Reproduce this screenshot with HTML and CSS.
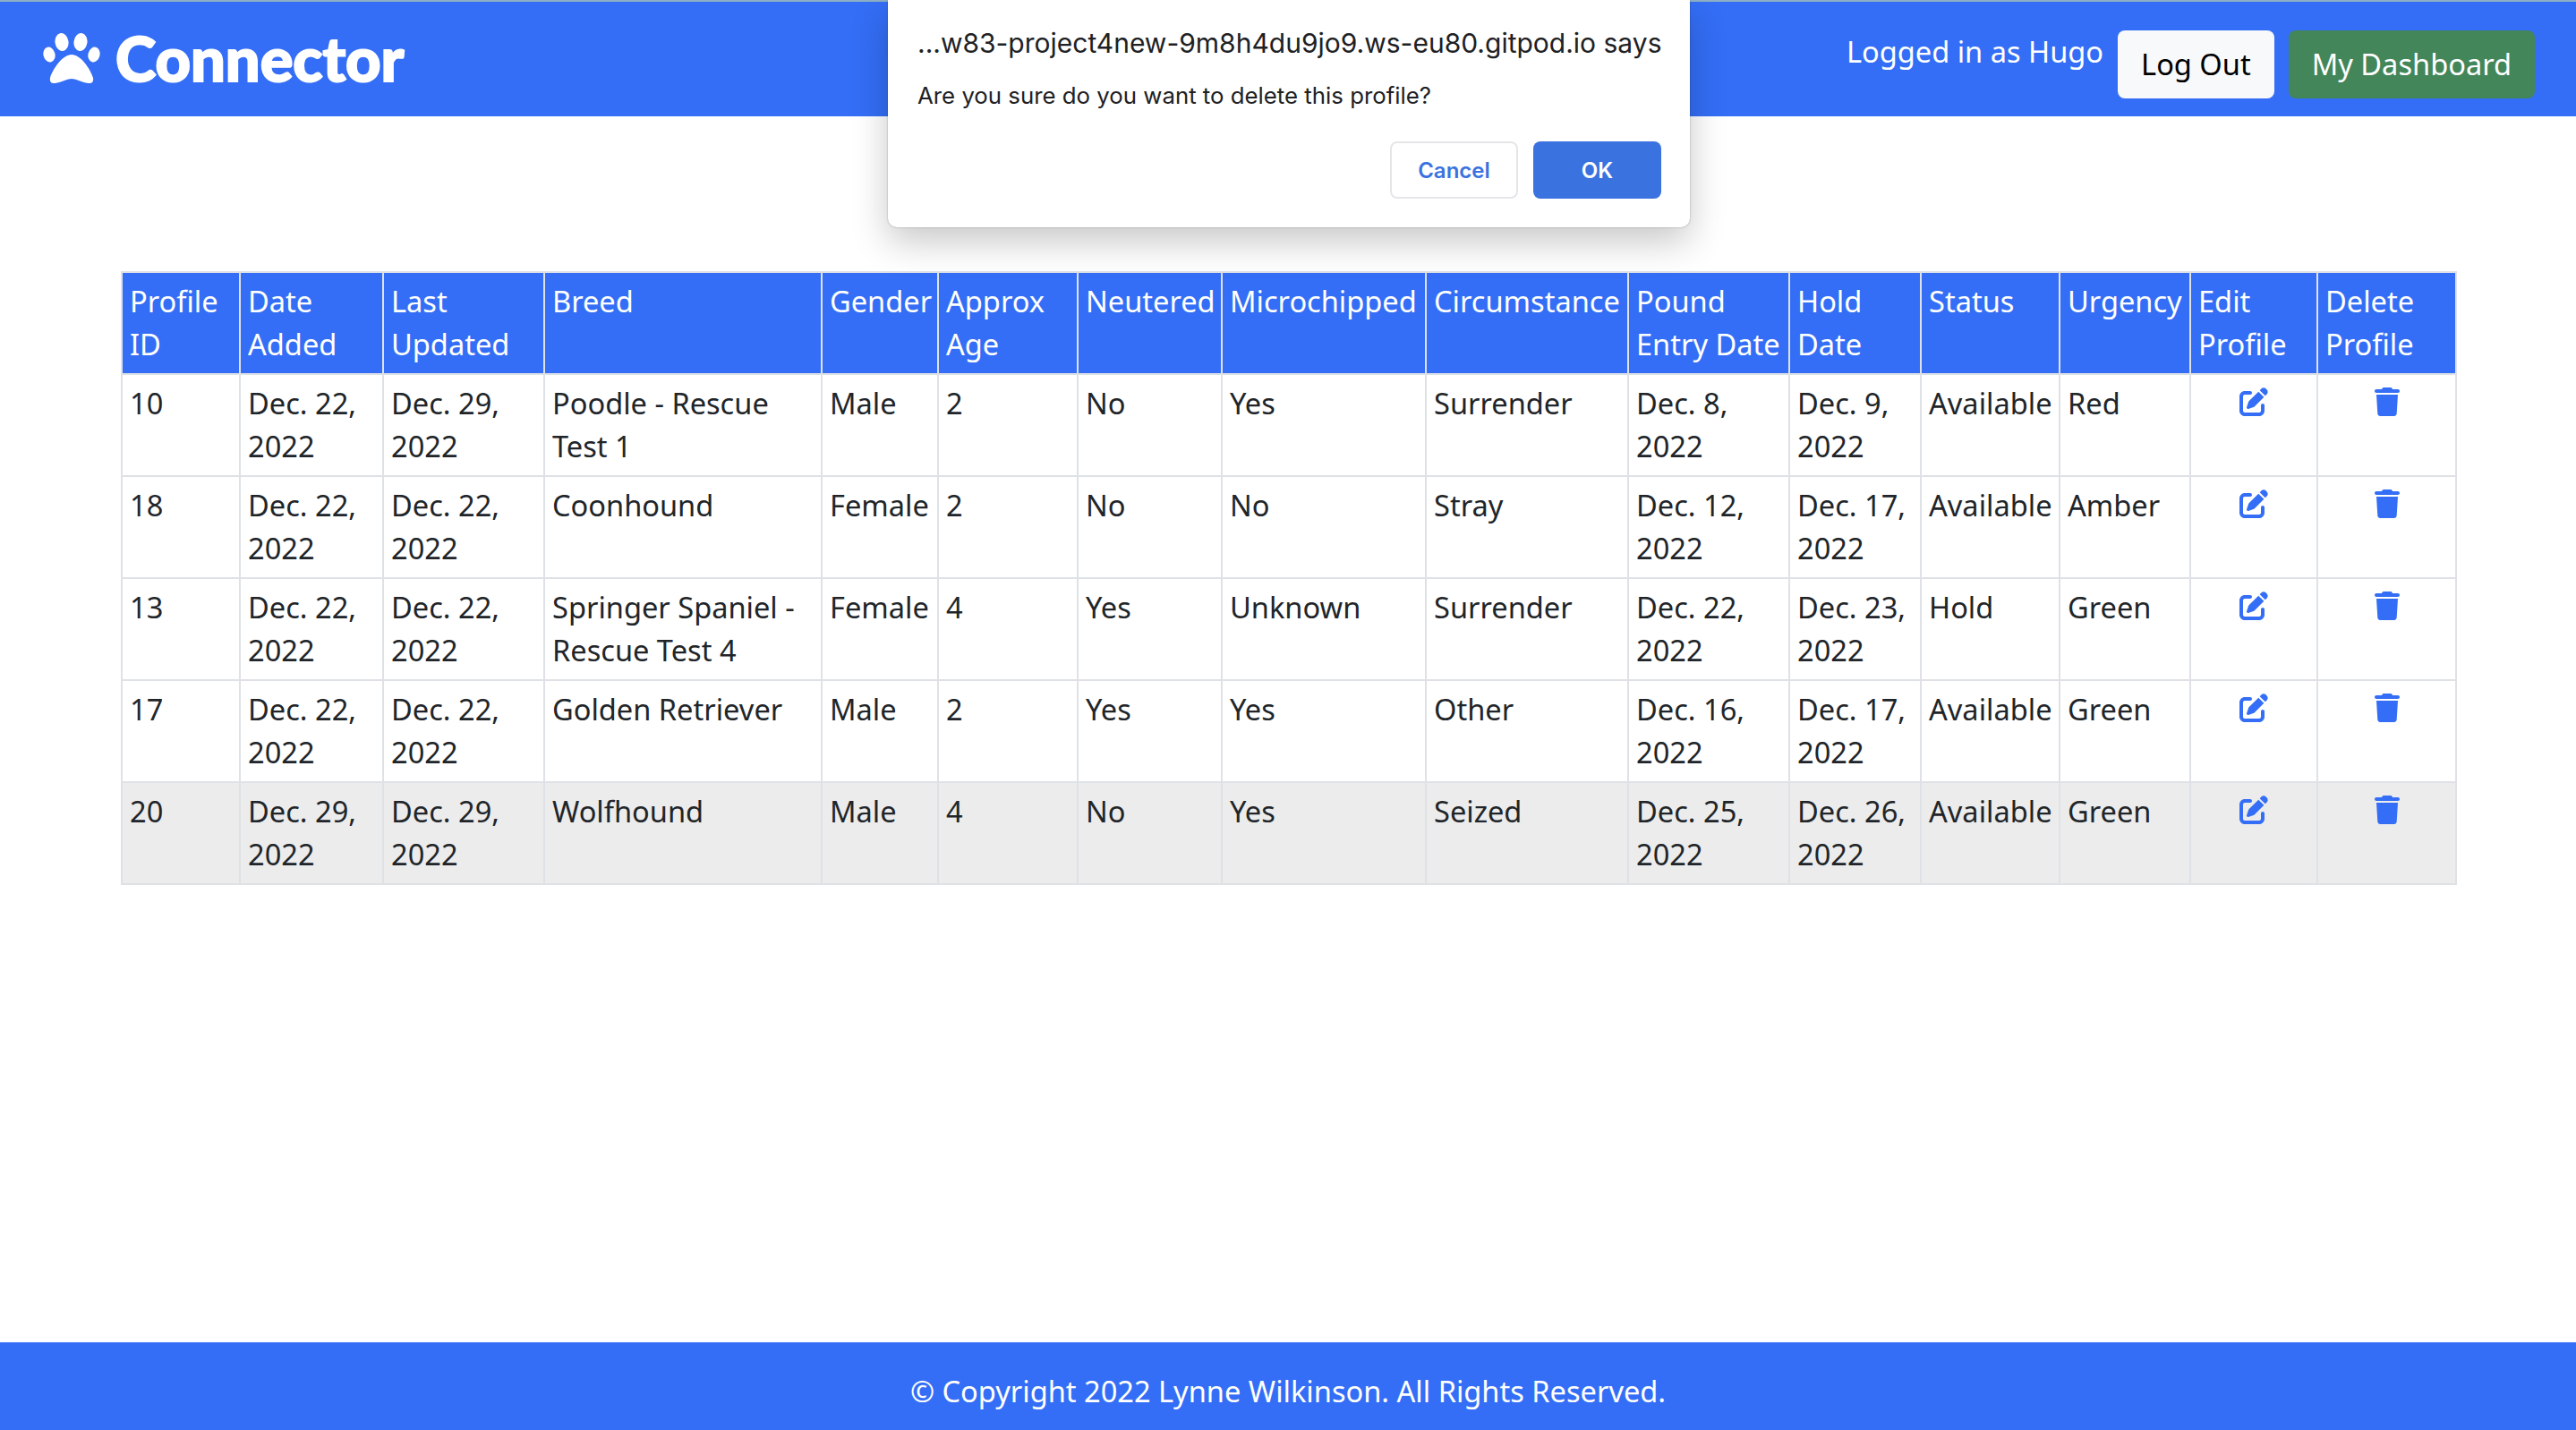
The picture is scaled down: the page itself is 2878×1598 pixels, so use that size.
FILE: index.html
```html
<!DOCTYPE html>
<html lang="en">

<head>
    <meta charset="UTF-8">
    <meta name="viewport" content="width=device-width, initial-scale=1.0">
    <title>Connector</title>
    <link rel="stylesheet" href="styles.css">
</head>

<body>
    <svg class="icon-defs" aria-hidden="true">
        <symbol id="icon-edit" viewBox="0 0 512 512">
            <path d="M471.6 21.7c-21.9-21.9-57.3-21.9-79.2 0L362.3 51.7l97.9 97.9 30.1-30.1c21.9-21.9 21.9-57.3 0-79.2L471.6 21.7zm-299.2 220c-6.1 6.1-10.8 13.6-13.5 21.9l-29.6 88.8c-2.9 8.6-.6 18.1 5.8 24.6s15.9 8.7 24.6 5.8l88.8-29.6c8.2-2.7 15.7-7.4 21.9-13.5L437.7 172.3 339.7 74.3 172.4 241.7zM96 64C43 64 0 107 0 160V416c0 53 43 96 96 96H352c53 0 96-43 96-96V320c0-17.7-14.3-32-32-32s-32 14.3-32 32v96c0 17.7-14.3 32-32 32H96c-17.7 0-32-14.3-32-32V160c0-17.7 14.3-32 32-32h96c17.7 0 32-14.3 32-32s-14.3-32-32-32H96z"/>
        </symbol>
        <symbol id="icon-trash" viewBox="0 0 448 512">
            <path d="M135.2 17.7L128 32H32C14.3 32 0 46.3 0 64S14.3 96 32 96H416c17.7 0 32-14.3 32-32s-14.3-32-32-32H320l-7.2-14.3C307.4 6.8 296.3 0 284.2 0H163.8c-12.1 0-23.2 6.8-28.6 17.7zM416 128H32L53.2 467c1.6 25.3 22.6 45 47.9 45H346.9c25.3 0 46.3-19.7 47.9-45L416 128z"/>
        </symbol>
    </svg>

    <header class="site-header">
        <a class="brand" href="#">
            <svg class="brand-paw" viewBox="0 0 64 56" aria-hidden="true">
                <ellipse cx="21" cy="10" rx="7.5" ry="10" transform="rotate(-8 21 10)"/>
                <ellipse cx="42" cy="10" rx="7.5" ry="10" transform="rotate(8 42 10)"/>
                <ellipse cx="7" cy="24" rx="6.5" ry="8.5" transform="rotate(-15 7 24)"/>
                <ellipse cx="57" cy="24" rx="6.5" ry="8.5" transform="rotate(15 57 24)"/>
                <path d="M32 24C42 24 53 40 56 50C57 56 53 57 48 55.5C42 54 36 51 32 51C28 51 22 54 16 55.5C11 57 7 56 8 50C11 40 22 24 32 24Z"/>
            </svg>
            <span class="brand-name">Connector</span>
        </a>
        <div class="user-nav">
            <span class="user-name">Logged in as Hugo</span>
            <a class="btn btn-light" href="#">Log Out</a>
            <a class="btn btn-green" href="#">My Dashboard</a>
        </div>
    </header>

    <main class="content">
        <table class="profiles">
            <colgroup>
                <col class="col-id">
                <col class="col-added">
                <col class="col-updated">
                <col class="col-breed">
                <col class="col-gender">
                <col class="col-age">
                <col class="col-neutered">
                <col class="col-chip">
                <col class="col-circ">
                <col class="col-entry">
                <col class="col-hold">
                <col class="col-status">
                <col class="col-urgency">
                <col class="col-edit">
                <col class="col-delete">
            </colgroup>
            <thead>
                <tr>
                    <th>Profile ID</th>
                    <th>Date Added</th>
                    <th>Last Updated</th>
                    <th>Breed</th>
                    <th>Gender</th>
                    <th>Approx Age</th>
                    <th>Neutered</th>
                    <th>Microchipped</th>
                    <th>Circumstance</th>
                    <th>Pound Entry Date</th>
                    <th>Hold Date</th>
                    <th>Status</th>
                    <th>Urgency</th>
                    <th>Edit Profile</th>
                    <th>Delete Profile</th>
                </tr>
            </thead>
            <tbody>
                <tr>
                    <td>10</td>
                    <td>Dec. 22, 2022</td>
                    <td>Dec. 29, 2022</td>
                    <td>Poodle - Rescue Test 1</td>
                    <td>Male</td>
                    <td>2</td>
                    <td>No</td>
                    <td>Yes</td>
                    <td>Surrender</td>
                    <td>Dec. 8, 2022</td>
                    <td>Dec. 9, 2022</td>
                    <td>Available</td>
                    <td>Red</td>
                    <td class="action"><a href="#"><svg class="icon icon-edit"><use href="#icon-edit"/></svg></a></td>
                    <td class="action"><a href="#"><svg class="icon icon-trash"><use href="#icon-trash"/></svg></a></td>
                </tr>
                <tr>
                    <td>18</td>
                    <td>Dec. 22, 2022</td>
                    <td>Dec. 22, 2022</td>
                    <td>Coonhound</td>
                    <td>Female</td>
                    <td>2</td>
                    <td>No</td>
                    <td>No</td>
                    <td>Stray</td>
                    <td>Dec. 12, 2022</td>
                    <td>Dec. 17, 2022</td>
                    <td>Available</td>
                    <td>Amber</td>
                    <td class="action"><a href="#"><svg class="icon icon-edit"><use href="#icon-edit"/></svg></a></td>
                    <td class="action"><a href="#"><svg class="icon icon-trash"><use href="#icon-trash"/></svg></a></td>
                </tr>
                <tr>
                    <td>13</td>
                    <td>Dec. 22, 2022</td>
                    <td>Dec. 22, 2022</td>
                    <td>Springer Spaniel - Rescue Test 4</td>
                    <td>Female</td>
                    <td>4</td>
                    <td>Yes</td>
                    <td>Unknown</td>
                    <td>Surrender</td>
                    <td>Dec. 22, 2022</td>
                    <td>Dec. 23, 2022</td>
                    <td>Hold</td>
                    <td>Green</td>
                    <td class="action"><a href="#"><svg class="icon icon-edit"><use href="#icon-edit"/></svg></a></td>
                    <td class="action"><a href="#"><svg class="icon icon-trash"><use href="#icon-trash"/></svg></a></td>
                </tr>
                <tr>
                    <td>17</td>
                    <td>Dec. 22, 2022</td>
                    <td>Dec. 22, 2022</td>
                    <td>Golden Retriever</td>
                    <td>Male</td>
                    <td>2</td>
                    <td>Yes</td>
                    <td>Yes</td>
                    <td>Other</td>
                    <td>Dec. 16, 2022</td>
                    <td>Dec. 17, 2022</td>
                    <td>Available</td>
                    <td>Green</td>
                    <td class="action"><a href="#"><svg class="icon icon-edit"><use href="#icon-edit"/></svg></a></td>
                    <td class="action"><a href="#"><svg class="icon icon-trash"><use href="#icon-trash"/></svg></a></td>
                </tr>
                <tr class="row-active">
                    <td>20</td>
                    <td>Dec. 29, 2022</td>
                    <td>Dec. 29, 2022</td>
                    <td>Wolfhound</td>
                    <td>Male</td>
                    <td>4</td>
                    <td>No</td>
                    <td>Yes</td>
                    <td>Seized</td>
                    <td>Dec. 25, 2022</td>
                    <td>Dec. 26, 2022</td>
                    <td>Available</td>
                    <td>Green</td>
                    <td class="action"><a href="#"><svg class="icon icon-edit"><use href="#icon-edit"/></svg></a></td>
                    <td class="action"><a href="#"><svg class="icon icon-trash"><use href="#icon-trash"/></svg></a></td>
                </tr>
            </tbody>
        </table>
    </main>

    <footer class="site-footer">© Copyright 2022 Lynne Wilkinson. All Rights Reserved.</footer>

    <div class="alert-box" role="alertdialog">
        <div class="alert-title">...w83-project4new-9m8h4du9jo9.ws-eu80.gitpod.io says</div>
        <div class="alert-message">Are you sure do you want to delete this profile?</div>
        <div class="alert-actions">
            <button type="button" class="alert-btn alert-cancel">Cancel</button>
            <button type="button" class="alert-btn alert-ok">OK</button>
        </div>
    </div>
</body>

</html>
```

FILE: styles.css
```css
body {
    display: flex;
    flex-direction: column;
    min-height: 100vh;
    margin: 0;
    font-family: "Noto Sans", Lato, sans-serif;
    font-size: 32.6px;
    line-height: 48px;
    color: #212529;
    background: #fff;
}

a {
    text-decoration: none;
}

.icon-defs {
    display: none;
}

.site-header {
    display: flex;
    justify-content: space-between;
    height: 128px;
    border-top: 2px solid #8fb0c4;
    background: #346ef6;
    color: #fff;
}

.brand {
    display: flex;
    align-items: center;
    gap: 17px;
    padding-left: 48px;
    padding-bottom: 2px;
    color: #fff;
}

.brand-paw {
    width: 64px;
    height: 56px;
    fill: #fff;
}

.brand-name {
    font-family: Lato, sans-serif;
    font-size: 68.5px;
    font-weight: 900;
    line-height: 1;
    -webkit-text-stroke: 2px #fff;
}

.user-nav {
    display: flex;
    align-items: flex-start;
    padding: 32px 46px 0 0;
}

.user-name {
    margin-right: 16px;
    line-height: 48px;
}

.btn {
    height: 76px;
    padding: 14px 26px;
    box-sizing: border-box;
    border-radius: 8px;
}

.btn-light {
    margin-right: 16px;
    background: #f8f9fa;
    color: #000;
}

.btn-green {
    background: #438659;
    color: #fff;
}

.content {
    flex: 1;
    padding: 173px 134px 0 135px;
}

.profiles {
    width: 2608px;
    table-layout: fixed;
    border-collapse: collapse;
    border: 2px solid #dee2e6;
}

.profiles th,
.profiles td {
    padding: 8px;
    border: 2px solid #dee2e6;
    font-weight: 400;
    text-align: left;
    vertical-align: top;
}

.profiles th {
    background: #346ef6;
    color: #fff;
}

.profiles td.action {
    text-align: center;
}

.row-active td {
    background: #ececec;
}

.col-id { width: 132px; }
.col-added { width: 160px; }
.col-updated { width: 180px; }
.col-breed { width: 310px; }
.col-gender { width: 130px; }
.col-age { width: 156px; }
.col-neutered { width: 161px; }
.col-chip { width: 228px; }
.col-circ { width: 226px; }
.col-entry { width: 180px; }
.col-hold { width: 147px; }
.col-status { width: 155px; }
.col-urgency { width: 146px; }
.col-edit { width: 142px; }
.col-delete { width: 155px; }

.icon {
    display: inline-block;
    height: 32px;
    fill: #346ef6;
    vertical-align: -2px;
}

.icon-edit {
    width: 32px;
}

.icon-trash {
    width: 28px;
}

.site-footer {
    height: 98px;
    box-sizing: border-box;
    padding-top: 31px;
    background: #346ef6;
    color: #fff;
    text-align: center;
}

.alert-box {
    position: absolute;
    top: 0;
    left: 992px;
    width: 896px;
    height: 254px;
    padding: 30px 32px 0 33px;
    box-sizing: border-box;
    border-radius: 0 0 10px 10px;
    background: #fff;
    box-shadow: 0 0 2px rgba(0, 0, 0, 0.35), 0 16px 40px rgba(0, 0, 0, 0.22);
    font-family: Inter, "Liberation Sans", sans-serif;
    color: #202124;
}

.alert-title {
    font-size: 30px;
    line-height: 36px;
    white-space: nowrap;
}

.alert-message {
    margin-top: 23px;
    font-size: 25.8px;
    line-height: 36px;
}

.alert-actions {
    display: flex;
    justify-content: flex-end;
    gap: 17px;
    margin-top: 33px;
}

.alert-btn {
    width: 143px;
    height: 64px;
    border-radius: 8px;
    font-family: inherit;
    font-size: 24px;
    font-weight: 600;
}

.alert-cancel {
    border: 2px solid #e4e6e8;
    background: #fff;
    color: #3a72e0;
}

.alert-ok {
    border: none;
    background: #3a72e0;
    color: #fff;
}
```
